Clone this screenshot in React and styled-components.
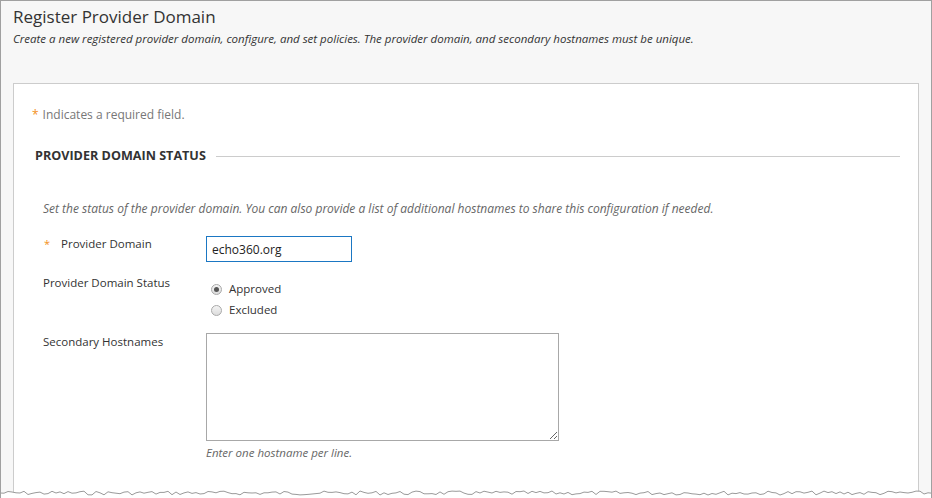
import styled, { createGlobalStyle } from "styled-components";

const GlobalStyle = createGlobalStyle`
  html, body {
    margin: 0;
    padding: 0;
    background: #ffffff;
  }
  body {
    font-family: "Open Sans", "Liberation Sans", sans-serif;
  }
`;

const Frame = styled.div`
  position: relative;
  width: 932px;
  height: 498px;
  box-sizing: border-box;
  overflow: hidden;
  background: #f7f7f7;
  border: 1px solid #a0a0a0;
  border-bottom: none;
`;

const Header = styled.header`
  padding: 4px 0 0 12px;
`;

const Title = styled.h1`
  margin: 0;
  font-size: 17px;
  font-weight: 400;
  line-height: 24px;
  color: #333;
`;

const Subtitle = styled.p`
  margin: 2px 0 0;
  font-size: 11.5px;
  font-style: italic;
  line-height: 16px;
  color: #333;
`;

const Panel = styled.section`
  margin: 36px 12px 0 12px;
  height: 500px;
  background: #fff;
  border: 1px solid #cccccc;
  padding: 0 18px 0 18px;
`;

const Required = styled.p`
  margin: 22px 0 0;
  font-size: 12px;
  line-height: 18px;
  color: #777;
`;

const Star = styled.span`
  color: #f39020;
  margin-right: 4px;
  font-size: ${(p) => (p.$small ? "11px" : "12px")};
`;

const SectionHead = styled.div`
  display: flex;
  align-items: center;
  margin: 23px 0 0 3px;
`;

const SectionTitle = styled.h2`
  margin: 0;
  font-size: 12.6px;
  font-weight: 700;
  line-height: 18px;
  color: #333;
  white-space: nowrap;
`;

const Rule = styled.div`
  flex: 1;
  height: 1px;
  background: #cccccc;
  margin-left: 10px;
`;

const Description = styled.p`
  margin: 36px 0 0 11px;
  font-size: 12px;
  font-style: italic;
  line-height: 16px;
  color: #666;
`;

const Form = styled.div`
  display: grid;
  grid-template-columns: 163px 1fr;
  margin: 19px 0 0 11px;
`;

const Label = styled.label`
  display: flex;
  align-items: baseline;
  font-size: 11.5px;
  line-height: 16px;
  color: #333;
  padding-left: ${(p) => (p.$required ? "1px" : "0")};
  margin-top: ${(p) => p.$top || "0"};
  ${Star} {
    margin-right: 11px;
  }
`;

const Field = styled.div`
  margin-top: ${(p) => p.$top || "0"};
`;

const TextInput = styled.input`
  display: block;
  box-sizing: border-box;
  width: 146px;
  height: 26px;
  padding: 0 5px;
  border: 1px solid #1b77c3;
  font-family: "Open Sans", "Liberation Sans", sans-serif;
  font-size: 12px;
  color: #222;
  outline: none;
`;

const RadioGroup = styled.div`
  display: flex;
  flex-direction: column;
  gap: 5px;
  padding-top: 5px;
`;

const RadioRow = styled.label`
  display: flex;
  align-items: center;
  font-size: 11.5px;
  line-height: 16px;
  color: #333;
  padding-left: 5px;
`;

const RadioDot = styled.span`
  box-sizing: border-box;
  width: 11px;
  height: 11px;
  border-radius: 50%;
  border: 1px solid #a9a9a9;
  background: linear-gradient(#f4f4f4, #dcdcdc);
  margin-right: 7px;
  display: flex;
  align-items: center;
  justify-content: center;
  &::after {
    content: "";
    width: 5px;
    height: 5px;
    border-radius: 50%;
    background: ${(p) => (p.$checked ? "#555" : "transparent")};
  }
`;

const TextArea = styled.textarea`
  display: block;
  box-sizing: border-box;
  width: 353px;
  height: 108px;
  border: 1px solid #a8a8a8;
  resize: both;
  font-family: "Open Sans", "Liberation Sans", sans-serif;
  outline: none;
`;

const Hint = styled.p`
  margin: 4px 0 0;
  font-size: 11.5px;
  font-style: italic;
  line-height: 16px;
  color: #666;
`;

const TornEdge = styled.svg`
  position: absolute;
  left: -1px;
  bottom: 0;
`;

const tornPoints = (() => {
  const pts = [];
  let seed = 7;
  const rnd = () => {
    seed = (seed * 9301 + 49297) % 233280;
    return seed / 233280;
  };
  for (let x = 0; x <= 934; x += 4) {
    pts.push(`${x},${(3 + rnd() * 4).toFixed(1)}`);
  }
  return pts;
})();

export default function App() {
  return (
    <>
      <GlobalStyle />
      <Frame>
        <Header>
          <Title>Register Provider Domain</Title>
          <Subtitle>
            Create a new registered provider domain, configure, and set policies. The provider
            domain, and secondary hostnames must be unique.
          </Subtitle>
        </Header>
        <Panel>
          <Required>
            <Star>*</Star>Indicates a required field.
          </Required>
          <SectionHead>
            <SectionTitle>PROVIDER DOMAIN STATUS</SectionTitle>
            <Rule />
          </SectionHead>
          <Description>
            Set the status of the provider domain. You can also provide a list of additional
            hostnames to share this configuration if needed.
          </Description>
          <Form>
            <Label $required>
              <Star $small>*</Star>Provider Domain
            </Label>
            <Field>
              <TextInput defaultValue="echo360.org" />
            </Field>
            <Label $top="13px">Provider Domain Status</Label>
            <Field $top="14px">
              <RadioGroup>
                <RadioRow>
                  <RadioDot $checked />
                  Approved
                </RadioRow>
                <RadioRow>
                  <RadioDot />
                  Excluded
                </RadioRow>
              </RadioGroup>
            </Field>
            <Label $top="16px">Secondary Hostnames</Label>
            <Field $top="15px">
              <TextArea />
              <Hint>Enter one hostname per line.</Hint>
            </Field>
          </Form>
        </Panel>
        <TornEdge width="934" height="10" viewBox="0 0 934 10">
          <polygon points={`0,10 ${tornPoints.join(" ")} 934,10`} fill="#ffffff" />
          <polyline points={tornPoints.join(" ")} fill="none" stroke="#9a9a9a" strokeWidth="1" />
        </TornEdge>
      </Frame>
    </>
  );
}
